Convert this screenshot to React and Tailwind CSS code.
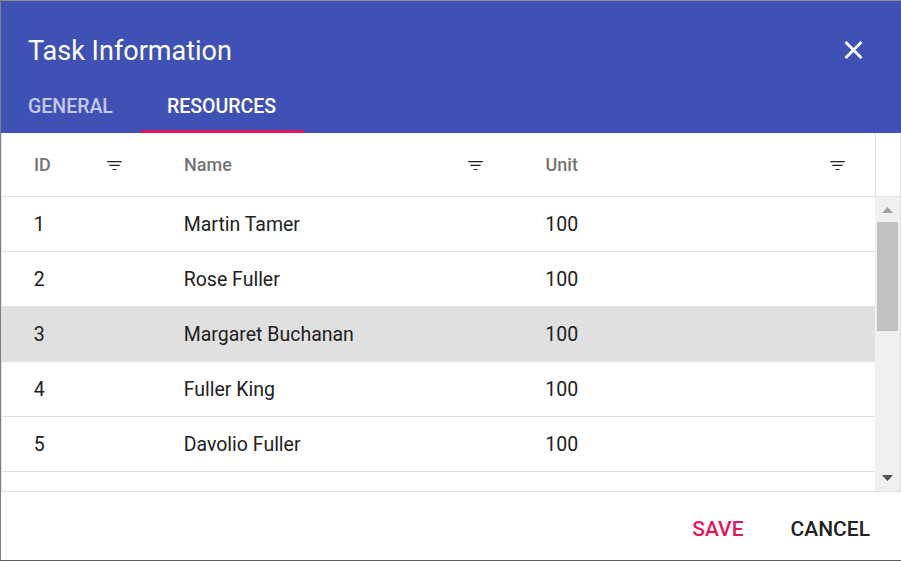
import React from "react";

const resources = [
  { id: 1, name: "Martin Tamer", unit: 100 },
  { id: 2, name: "Rose Fuller", unit: 100 },
  { id: 3, name: "Margaret Buchanan", unit: 100, selected: true },
  { id: 4, name: "Fuller King", unit: 100 },
  { id: 5, name: "Davolio Fuller", unit: 100 },
];

function FilterIcon() {
  return (
    <svg className="mt-[2px] h-[9px] w-[15px] shrink-0" viewBox="0 0 15 9" aria-hidden="true">
      <path d="M0.2 0h14.6v1H0.2zM2.4 4h10.2v1H2.4zM5.5 8h4v1h-4z" fill="#212121" />
      <path d="M0.2 1h14.6v1H0.2zM2.4 3h10.2v1H2.4z" fill="#c4c4c4" />
    </svg>
  );
}

function HeaderCell({ label, className }) {
  return (
    <div className={`flex items-center justify-between ${className}`}>
      <span>{label}</span>
      <FilterIcon />
    </div>
  );
}

function Scrollbar() {
  return (
    <div className="flex w-[25px] shrink-0 flex-col items-center bg-[#f0f0f0]">
      <svg className="mt-[10px] h-[6px] w-[11px] shrink-0" viewBox="0 0 11 6" aria-hidden="true">
        <path d="M0 6L5.5 0L11 6z" fill="#a3a3a3" />
      </svg>
      <div className="mt-[9px] h-[109px] w-[21px] shrink-0 bg-[#c1c1c1]" />
      <svg className="mt-auto mb-[10px] h-[6px] w-[11px] shrink-0" viewBox="0 0 11 6" aria-hidden="true">
        <path d="M0 0L5.5 6L11 0z" fill="#505050" />
      </svg>
    </div>
  );
}

export default function App() {
  return (
    <div className="flex h-[561px] w-[901px] flex-col overflow-hidden border-t border-b border-l border-t-[#8c8c8c] border-b-[#5c5c5c] border-l-[#808080] bg-white font-['Roboto',sans-serif] text-[#212121]">
      <header className="flex h-[132px] shrink-0 flex-col bg-[#3f51b5] text-white">
        <div className="flex h-[78px] items-center justify-between pt-[21px] pr-[38px] pl-[27px]">
          <h1 className="text-[27px] leading-[36px] font-normal">Task Information</h1>
          <button className="mb-[1px]" aria-label="Close">
            <svg className="h-[18px] w-[19px]" viewBox="0 0 19 18" aria-hidden="true">
              <path d="M1.5 1L17.5 17M17.5 1L1.5 17" stroke="#fff" strokeWidth="2.8" />
            </svg>
          </button>
        </div>
        <nav className="flex h-[54px] text-[19.5px] font-medium">
          <button className="flex w-[140px] items-center pt-[2px] pl-[27px] text-white/70">GENERAL</button>
          <button className="flex w-[163px] items-center border-b-[3px] border-[#e3165b] pt-[5px] pl-[26px]">RESOURCES</button>
        </nav>
      </header>
      <main className="flex h-[359px] shrink-0 flex-col border-r border-b border-l border-[#e0e0e0]">
        <div className="flex h-[64px] shrink-0 border-b border-[#e0e0e0] text-[18px] font-medium text-[#757575]">
          <HeaderCell label="ID" className="w-[150px] pr-[30px] pl-[32px]" />
          <HeaderCell label="Name" className="w-[361px] pr-[30px] pl-[32px]" />
          <HeaderCell label="Unit" className="w-[362px] pr-[30px] pl-[32.5px]" />
          <div className="w-[25px] border-l border-[#e0e0e0]" />
        </div>
        <div className="flex min-h-0 grow overflow-hidden">
          <div className="w-[873px] shrink-0 text-[19.5px]">
            {resources.map((r) => (
              <div
                key={r.id}
                className={`flex h-[55px] items-center border-b border-[#e0e0e0] pt-[2px] ${r.selected ? "bg-[#e0e0e0]" : ""}`}
              >
                <span className="w-[150px] pl-[31.8px]">{r.id}</span>
                <span className="w-[361px] pl-[31.7px]">{r.name}</span>
                <span className="pl-[32.3px]">{r.unit}</span>
              </div>
            ))}
          </div>
          <Scrollbar />
        </div>
      </main>
      <footer className="flex grow items-center justify-end gap-[47px] pt-[8px] pr-[31px] text-[21px] font-medium">
        <button className="text-[#e3165b]">SAVE</button>
        <button>CANCEL</button>
      </footer>
    </div>
  );
}
